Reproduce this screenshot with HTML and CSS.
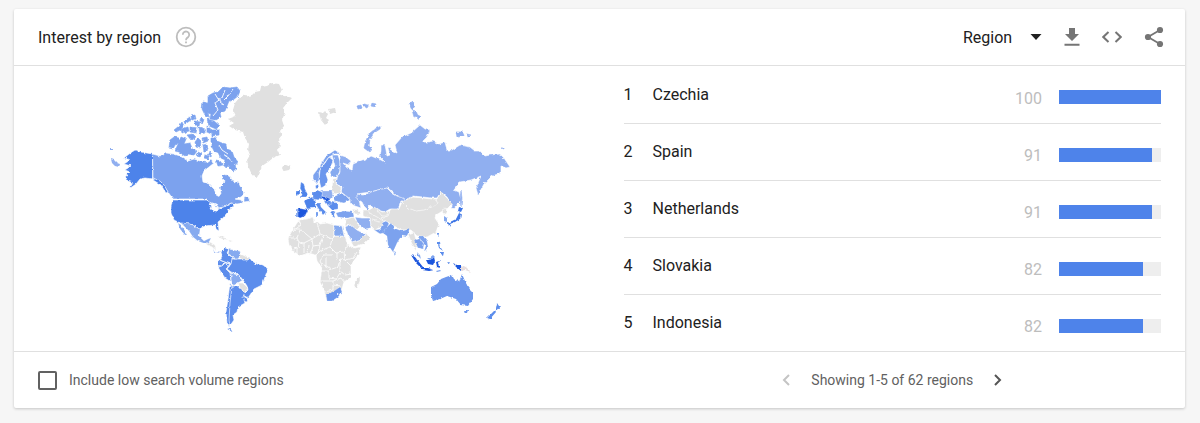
FILE: index.html
```html
<!DOCTYPE html>
<html lang="en">
<head>
  <meta charset="UTF-8">
  <meta name="viewport" content="width=device-width, initial-scale=1">
  <title>Interest by region</title>
  <link rel="stylesheet" href="styles.css">
</head>
<body>
  <section class="card">
    <header class="card-header">
      <h1>Interest by region</h1>
      <button type="button" class="icon-btn help" aria-label="Help">
        <svg width="22" height="22" viewBox="0 0 22 22" fill="none" stroke="#bdbdbd" stroke-width="1.8">
          <circle cx="11" cy="11" r="9.3"/>
          <path d="M7.8 8.8a3.2 3.2 0 1 1 5.2 2.4c-1.2 1-2 1.4-2 3"/>
          <path d="M11 15.4v1.9"/>
        </svg>
      </button>
      <div class="tools">
        <div class="picker">
          <select aria-label="Resolution">
            <option>Region</option>
            <option>City</option>
          </select>
          <svg class="caret" width="12" height="6" viewBox="0 0 12 6"><path d="M0.5 0h11L6 6z" fill="#212121"/></svg>
        </div>
        <button type="button" class="icon-btn" aria-label="Download">
          <svg width="16" height="18" viewBox="0 0 16 18" fill="#757575"><path d="M5 0h6v6h4l-7 7-7-7h4zM.5 15.700h15v2H.5z"/></svg>
        </button>
        <button type="button" class="icon-btn" aria-label="Embed">
          <svg width="20" height="12" viewBox="1 0 20 12" fill="none" stroke="#757575" stroke-width="2"><path d="M7.500 1L2.300 6l5.200 5M14.500 1l5.200 5-5.200 5"/></svg>
        </button>
        <button type="button" class="icon-btn" aria-label="Share">
          <svg width="20" height="22" viewBox="0 0 20 22" fill="#757575"><path d="M16 4L4 11l12 7" fill="none" stroke="#757575" stroke-width="1.800"/><circle cx="16" cy="4" r="3.100"/><circle cx="4" cy="11" r="3.100"/><circle cx="16" cy="18" r="3.100"/></svg>
        </button>
      </div>
    </header>

    <div class="card-body">
      <div class="map-panel">
        <svg class="map" viewBox="97 75 420 267" role="img" aria-label="World map">
          <defs>
            <!-- roughens the coastlines -->
            <filter id="coast" x="0" y="0" width="100%" height="100%">
              <feTurbulence type="fractalNoise" baseFrequency="0.28" numOctaves="2" seed="4" result="noise"/>
              <feDisplacementMap in="SourceGraphic" in2="noise" scale="3" xChannelSelector="R" yChannelSelector="G"/>
            </filter>
          </defs>
          <g filter="url(#coast)" stroke="#fff" stroke-width="0.6" stroke-linejoin="round">
            <!-- Canada -->
            <g fill="#7ba2ee">
              <path d="M152.500 154L160 156 166 153 174 154 180 156 188 161 194 159 200 161 207 162 211 159 214 163 209 167 204 171 202 176 203 182 209 184 214 189 217 196 221 194 220 187 225 182 222 177 223 174 229 176 235 183 238 181 241 188 245 193 241 197 235 199 241 200 243 203 237 204 231 203 224 207 218 208 212 204 207 199H173L168 192 162 183 153 178z"/>
              <path d="M244 198l4-1 2 4-6 1z"/>
            </g>
            <g fill="#7ba2ee" stroke="#7ba2ee">
              <path d="M208 96l5-3 5-1 5-5 7 1 7-1 3 4-2 5-5 4-4 1-2 5-2 5-5 2 1 4-5 3-6-1 1-5-4-1 2-5-3-2 2-4z"/>
              <path d="M203 102l4 1 3 6-3 3 3 6-5-3-3-6zM207 119l7 2 6 5-4 3-7-3z"/>
              <path d="M191 116l4-1 1 4-4 1zM195 121l5 1-1 4-4-1zM201 117l3 3-2 4-2-3zM184 121l6-4 1 3-6 4zM174 130l5-4 3-4 2 4-4 4-4 2zM181 129l7-2 1 4-7 2zM190 127l7 1-1 5-6-1zM199 127l6 2 1 4-6 1zM207 126l5 4-1 4-4-2zM211 130h8v5l-7 1z"/>
              <path d="M170 140l4-3 5 1 1 4-5 3-2 4-4-1zM178 144l3-7 5 2-2 5 6-1 2 5 5 3-3 4-6-1-3 2-6-4-4-1zM187 135l6-1 3 3-5 3zM195 142l3-4 3 3-1 7-4-1zM202 138l5-1 1 4-5 2zM203 145l4-1 1 5-4 3zM211 137l5 1-1 6-4-2z"/>
              <path d="M212 140l5 1 5 2 4 1 1 5 5 2 2 6 4 5-3 2 1 5-3 2-5-5-2 2-2-4 1-4-4-2-2-5-5-2-2-4z"/>
              <path d="M216 160l4 1 3 4-5 1zM205 155l4 1-1 3-4-1zM198 152l4 2-2 3-4-2zM209 151l3 3-1 3-3-2z"/>
            </g>
            <g fill="none" stroke-width="0.9">
              <path d="M215 94l5 8 4 3M225 90l-3 8-7 5 3 7-5 6M233 89l-5 7-4 4M219 145l3 5 6 4M224 155l5 3 3 5"/>
            </g>

            <!-- United States -->
            <g fill="#4e83ea">
              <path d="M124 158L129 154 135 150 141 152 152.500 154V179L145 178 140 179 136 184 129 189 133 183 128 181 125 176 130 172 125 170 131 166 124 164 130 160z"/>
              <path d="M153 178l7 3 4 4 4 7-2 1-5-8-8-5z"/>
              <path d="M172.500 200H207L212 204 210 209 215 211 221 208 226 206 232 203 234 206 229 209 227 213 223 218 218 222 219 231 216 229 215 225 205 226 199 229 195 225 190 224 180 223 174 220 171 213 171 207z"/>
              <path d="M111 159l3 1 3 3 3 1-1 3-4-1-3-3zM110 149l2 0 0 1-2 0z" fill="#90aff0" stroke="none"/>
            </g>
            <path d="M209 204l5 1 4 2-1 4-3-1M212 203l6 2" stroke-width="1.300" fill="none"/>

            <!-- Mexico and Central America -->
            <path fill="#86aaef" stroke-width="0.2" d="M181 223L190 224 195 226 200 230 199 236 204 241 208 239 211 238 209 242 206 244 198 241 193 237 189 231zM178 223l3 2 6 10-2 0-5-6z"/>
            <path fill="#e0e0e0" d="M206 243l4-1 5 3 1 5-4-3-5-2zM217 236l6 1 5 3-6-1zM228 240l5 1-3 1z"/>
            <path fill="#6f98ec" d="M213 249l3 3 4-1-1 2-5-1z"/>

            <!-- South America -->
            <g fill="#5c8dec">
              <path d="M225 248L229 249 227 253 230 256 233 257 231 264 225 262 220 260 222 256 221 252z"/>
              <path d="M219 260l5 2-2 4-4 1z"/>
              <path d="M218 267L222 266 225 263 230 264 226 269 230 273 231 282 225 278 221 272z"/>
              <path d="M232 259L240 259 249 257 252 261 257 264 263 265 268 269 265 277 262 285 254 289 248 298 243 295 248 290 247 286 243 280 238 274 231 272 227 269 231 264z"/>
              <path d="M243 296l5 3-1 3-5-1z"/>
              <path d="M232 286L239 286 245 292 243 297 245 303 238 307 237 312 233 315 234 320 229 327 227 320 229 303z"/>
              <path d="M230 283l2 3-2 17-1 17 1 6-3-3-1-11 2-13z"/>
            </g>
            <path fill="#86aaef" d="M229 249L234 250 240 251 241 255 238 259 234 259 232 256 228 254zM231 273L238 275 243 280 238 283 233 286 231 280zM229 328l5 4-3 0-4-3z"/>
            <path fill="#e0e0e0" d="M241 254L245 256 250 258 248 260 243 260 240 258zM238 283L243 283 248 288 245 292 240 288z"/>

            <!-- Greenland, Iceland, Svalbard -->
            <g fill="#e0e0e0" stroke="none">
              <path d="M235 103L240 97 246 95 250 97 255 92 260 91 261 87 267 86 272 83 279 84 282 90 278 94 284 96 292 98 287 103 283 108 285 113 282 120 284 126 280 131 282 136 278 141 281 145 277 149 280 155 273 158 268 162 262 166 259 172 257 178 252 175 249 168 247 160 250 155 248 150 249 144 245 138 243 132 235 130 229 126 234 123 228 119 236 116 233 110z"/>
              <path d="M282 167l4-2 5 2-2 3-5 1zM319 112l4 1 2-2 3 3-2 4 3 2-4 5-4-5zM328 109l7-1 1 4-6 2z"/>
            </g>

            <!-- Nordics -->
            <path fill="#7ba2ee" d="M313 175L316 171 321 164 326 156 335 150 341 154 335 154 329 157 322 166 319 173 320 180 316 183 313 180z"/>
            <path fill="#6c97ed" d="M329 157L333 160 331 167 326 174 328 180 325 186 321 188 319 180 320 170z"/>
            <path fill="#86aaef" d="M332 155L338 155 340 161 340 171 337 177 331 177 330 172 335 166z"/>
            <path fill="#5c8dec" d="M315 185l3-2 1 5-3 1z"/>

            <!-- Russia -->
            <g fill="#90aff0">
              <path d="M340 155L346 157 351 161 349 165 343 163 347 168 352 170 353 164 358 162 362 160 367 159 371 156 376 158 381 160 386 163 380 157 381 150 381 145 385 145 386 150 387 156 390 155 388 148 390 146 392 151 397 153 395 145 402 137 411 133 420 125 425 129 430 130 427 137 422 142 428 142 433 141 439 144 445 142 447 150 452 150 460 145 470 147 475 151 480 151 485 156 490 155 500 154 504 158 510 167 506 168 501 166 501 173 495 175 490 178 484 184 478 195 476 188 481 176 476 178 471 180 460 182 454 190 459 192 461 200 453 209 450 202 447 197 441 192 437 198 431 198 423 197 413 196 403 201 397 196 388 188 378 190 371 192 363 193 357 194 359 200 361 208 355 206 350 203 350 199 345 195 341 192 342 187 336 184 337 178 340 172 340 163z"/>
              <path stroke="#90aff0" d="M364 148l2-8 4-7 5-4 6-3-1 3-6 4-4 6-1 7 3 4-4 1zM357 106l4-1 1 3-4 1zM364 104l5 1-2 3-3-1zM372 103l4 1-1 3-4-1zM409 104l4-3 2 5-3 4zM412 110l4 1 2 5-4 1zM417 115l4 1-3 3zM456 132l7 0 1 4-7 1zM467 134l4 1-3 2zM502 148l2 0 0 1zM461 191l1 7-1 8-1-6z"/>
              <!-- Kazakhstan -->
              <path d="M357 194L363 195 371 192 378 190 387 188 392 193 397 196 405 199 400 203 398 210 390 209 385 212 377 210 370 205 368 210 364 206 362 202 357 199z"/>
              <!-- Turkey -->
              <path fill="#7ba2ee" stroke-width="0.2" d="M336 213L343 211 353 212 354 217 346 218 338 217z"/>
            </g>

            <!-- Europe -->
            <path fill="#e0e0e0" d="M333 179L337 178 336 184 341 187 341 193 334 194 332 188z"/>
            <g stroke-width="0.3">
              <path fill="#7ba2ee" d="M333 197L340 194 345 195 350 200 344 203 339 202 334 200z"/>
              <path fill="#90aff0" d="M322 191L332 191 333 196 330 199 322 196z"/>
              <path fill="#5c8dec" d="M313 192L317 190 322 192 322 198 319 200 313 199z"/>
              <path fill="#4e83ea" d="M304 201L311 197 316 201 315 208 307 209z"/>
              <path fill="#1f57dd" d="M298 208L308 210 305 216 300 218 297 216z"/>
              <path fill="#7ba2ee" d="M296 209l2 0 0 8-2 0z"/>
              <path fill="#4e83ea" d="M301 182l3 2 1 5 3 6-2 2-6 0 2-5-2-4zM296 190l4 0 0 4-4 2z"/>
              <path fill="#1f57dd" d="M321 196l5 1 5 2-3 2-6-2z"/>
              <path fill="#5c8dec" d="M315 203L320 203 321 207 326 212 323 215 318 208zM324 201L330 200 332 204 327 206zM331 202L338 203 338 209 332 210 328 206zM331 211l5 0-2 3 1 4-3-2zM316 212l2 0 0 4-2 0z"/>
            </g>

            <!-- Africa -->
            <path fill="#e0e0e0" d="M299 220L306 219 313 217 314 222 320 224 327 223 334 225 342 226 345 236 348 245 354 248 361 247 358 255 351 265 351 277 344 282 341 292 333 299 327 300 324 291 320 282 322 268 317 261 316 255 308 253 300 256 293 251 289 245 288 238 293 229zM355 281l5-5 0 5-3 7-3-1z"/>
            <g fill="none" stroke-width="0.800">
              <path d="M299 220l2 5-8 6M293 229l7 0 12 10 8-5-3-12M288 238l9 0 3-8M334 225v12l-2 2-12-5M334 236h11M312 239l-8 4-5-1-2-4M304 243v10M299 242l-1 6-9-1M309 245l-1 8M312 239l1 7 7-1 3-9M313 246l-2 7M320 245l-2 8M332 239l-2 8-10 4-4 4M330 247l6 6 8-1 4-8M344 252l1 8 8-2 4-6M332 255l-8 0-4 6 2 4M324 265l8 4 6-2 2-8 5 1M340 259l0 12 5 4 7-1M321 271h8l0 7 7 1 4-6M320 281h13l8-3M333 281l0 9-8 2M333 285l8 1M326 257v9M345 260l6 6M337 253l0 7M293 250l4-3 0 7M341 278l3 4"/>
            </g>
            <path fill="#86aaef" d="M334 225L342 226 344 236 334 236z"/>
            <path fill="#6c97ed" stroke-width="0.2" d="M326 293L330 293 334 291 340 287 342 292 338 297 332 301 327 301z"/>
            <circle cx="338" cy="294" r="1" fill="#fff" stroke="none"/>

            <!-- Middle East and Central Asia -->
            <path fill="#e0e0e0" d="M346 219L354 217 359 226 357 230 351 225 345 226zM351 242L361 239 366 233 370 238 365 243 354 247zM352 209l6 1 3 4-6 0zM363 210L369 210 374 207 382 212 390 211 396 214 394 219 387 220 384 225 375 230 371 226 370 218 363 216z"/>
            <path fill="#90aff0" d="M355 217L362 218 370 218 371 228 366 229 361 227 357 222zM345 227L351 225 357 230 361 232 366 234 361 239 352 242 348 235z"/>
            <path fill="#7ba2ee" d="M374 230L380 229 383 222 388 220 389 224 384 233 380 234z"/>
            <path d="M368 212l9 5 8 5M377 210l5 6 10 0M372 220l8 2" fill="none"/>

            <!-- China, Mongolia -->
            <path fill="#e0e0e0" d="M381 218L388 216 391 209 399 209 402 202 412 197 423 198 431 199 437 199 441 192 447 198 452 203 448 208 441 212 436 215 435 218 439 224 436 232 427 237 417 236 411 230 400 230 391 224z"/>
            <path d="M402 202l6 6 8 3 8-1 10-4 4-3-2-4M392 225l9 5 9 1" fill="none"/>
            <path fill="#e0e0e0" d="M408 234L414 232 416 240 416 250 412 244zM442 210l4-2 1 5-3 2z"/>

            <!-- South and South-East Asia -->
            <path fill="#7ba2ee" stroke-width="0.2" d="M383 233L387 227 391 223 394 228 402 231 410 229 407 236 402 235 397 243 393 252 388 245 387 236zM393 251l3 1-1 3zM414 240L420 239 424 244 423 249 418 248zM418 236l5 0 4 5 1 6-4 5 2-7-5-5zM417 252l3 3 1 4-3-3z"/>
            <path fill="#5c8dec" stroke="none" d="M437 241l3 1 1 6 2 3-4-3zM440 252l4 0-1 4-3-2zM437 233l2 0-1 4z"/>
            <g fill="#1f57dd" stroke="none">
              <path d="M411 255l4 2 4 5 4 5-2 1-5-5zM422 268l6 0 6 2-5 1-7-1zM426 260l4 0 4-3 1 4-2 4-5-1zM436 262l4-1-2 2 2 5-3-1zM453 263l4 2 4 0 0 6-5-4z"/>
              <path fill="#7ba2ee" d="M428 259l5-4 2 2-5 3zM447 262l3 0-1 2zM436 271l4-1 1 1-4 1z"/>
              <path fill="#e8dede" d="M461 265l5 2 5 5-6-2-4 1z"/>
            </g>

            <!-- Japan, Korea -->
            <path fill="#3f77e6" stroke="none" d="M459 207l4 1-2 4-3-1zM459 213l2 1-1 5-5 3-5 2 0-2 6-3zM448 222l3 1-2 4z"/>
            <path fill="#86aaef" stroke="none" d="M444 216l3 2 0 4-3-1z"/>

            <!-- Australia, New Zealand -->
            <path fill="#6c97ed" stroke="none" d="M431 287L437 284 441 279 446 277 452 275 454 279 459 282 462 274 465 281 468 287 473 292 473 299 468 306 461 305 456 299 447 296 440 299 433 301 431 295zM464 310l4 0-1 3-2 0z"/>
            <path fill="#5c8dec" stroke="none" d="M497 303l2 3 2 0-4 5-1-3zM495 310l1 2-6 7-3-1z"/>
          </g>
        </svg>
      </div>

      <div class="list-panel">
        <table class="regions">
          <tbody>
            <tr>
              <td class="rank">1</td>
              <td class="name">Czechia</td>
              <td class="value">100</td>
              <td class="bar-cell"><div class="bar"><div class="bar-fill" style="width: 100%"></div></div></td>
            </tr>
            <tr>
              <td class="rank">2</td>
              <td class="name">Spain</td>
              <td class="value">91</td>
              <td class="bar-cell"><div class="bar"><div class="bar-fill" style="width: 91%"></div></div></td>
            </tr>
            <tr>
              <td class="rank">3</td>
              <td class="name">Netherlands</td>
              <td class="value">91</td>
              <td class="bar-cell"><div class="bar"><div class="bar-fill" style="width: 91%"></div></div></td>
            </tr>
            <tr>
              <td class="rank">4</td>
              <td class="name">Slovakia</td>
              <td class="value">82</td>
              <td class="bar-cell"><div class="bar"><div class="bar-fill" style="width: 82%"></div></div></td>
            </tr>
            <tr>
              <td class="rank">5</td>
              <td class="name">Indonesia</td>
              <td class="value">82</td>
              <td class="bar-cell"><div class="bar"><div class="bar-fill" style="width: 82%"></div></div></td>
            </tr>
          </tbody>
        </table>
      </div>
    </div>

    <footer class="card-footer">
      <label class="low-volume">
        <input type="checkbox">
        Include low search volume regions
      </label>
      <nav class="pager">
        <button type="button" class="icon-btn" aria-label="Previous" disabled>
          <svg width="8" height="12" viewBox="0 0 8 12" fill="none" stroke="#c4c4c4" stroke-width="2"><path d="M7 1L2 6l5 5"/></svg>
        </button>
        <span>Showing 1-5 of 62 regions</span>
        <button type="button" class="icon-btn" aria-label="Next">
          <svg width="8" height="12" viewBox="0 0 8 12" fill="none" stroke="#555" stroke-width="2"><path d="M1 1l5 5-5 5"/></svg>
        </button>
      </nav>
    </footer>
  </section>
</body>
</html>
```
FILE: styles.css
```css
* {
  box-sizing: border-box;
}
body {
  margin: 0;
  padding: 9px 15px 16px 14px;
  background: #f6f6f6;
  color: #212121;
  font-family: Roboto, Arial, sans-serif;
  font-size: 16px;
}
.card {
  background: #fff;
  border-radius: 2px;
  box-shadow: 0 1px 3px rgba(0, 0, 0, 0.2);
}

/* Header */
.card-header {
  display: flex;
  align-items: center;
  height: 57px;
  padding: 0 21px 0 24px;
  border-bottom: 1px solid #e0e0e0;
}
h1 {
  margin: 0;
  font-size: 16px;
  font-weight: 400;
}
.icon-btn {
  display: flex;
  padding: 0;
  border: none;
  background: none;
  cursor: pointer;
}
.help {
  margin-left: 14px;
}
.tools {
  display: flex;
  align-items: center;
  gap: 22px;
  margin-left: auto;
}
.picker {
  display: grid;
  align-items: center;
}
.picker select,
.picker .caret {
  grid-area: 1 / 1;
}
.picker select {
  appearance: none;
  width: 79px;
  padding: 0;
  border: none;
  background: none;
  color: inherit;
  font: inherit;
}
.caret {
  justify-self: end;
  pointer-events: none;
}

/* Map and list */
.card-body {
  display: grid;
  grid-template-columns: 1fr 1fr;
  border-bottom: 1px solid #e0e0e0;
}
.map-panel {
  display: flex;
  align-items: center;
  justify-content: center;
}
.map {
  width: 100%;
  max-width: 420px;
}
.list-panel {
  padding: 0 24px;
}
.regions {
  width: 100%;
  border-collapse: collapse;
}
.regions td {
  height: 57px;
  padding: 0;
  border-bottom: 1px solid #e0e0e0;
}
.regions tr:last-child td {
  border-bottom: none;
}
.rank {
  width: 29px;
}
.regions .value {
  padding-top: 8px;
  color: #bdbdbd;
  text-align: right;
}
.regions .bar-cell {
  width: 119px;
  padding: 6px 0 0 17px;
}
.bar {
  height: 14px;
  background: #eee;
}
.bar-fill {
  height: 100%;
  background: #4e83ea;
}

/* Footer */
.card-footer {
  display: grid;
  grid-template-columns: 1fr 1fr;
  align-items: center;
  height: 56px;
  color: #616161;
  font-size: 14px;
}
.low-volume {
  display: flex;
  align-items: center;
  gap: 12px;
  padding-left: 24px;
}
.low-volume input {
  appearance: none;
  width: 19px;
  height: 19px;
  margin: 0;
  border: 2px solid #616161;
  border-radius: 2px;
}
.low-volume input:checked {
  background: #4e83ea;
}
.pager {
  display: flex;
  align-items: center;
  justify-content: center;
  gap: 21px;
}
```
